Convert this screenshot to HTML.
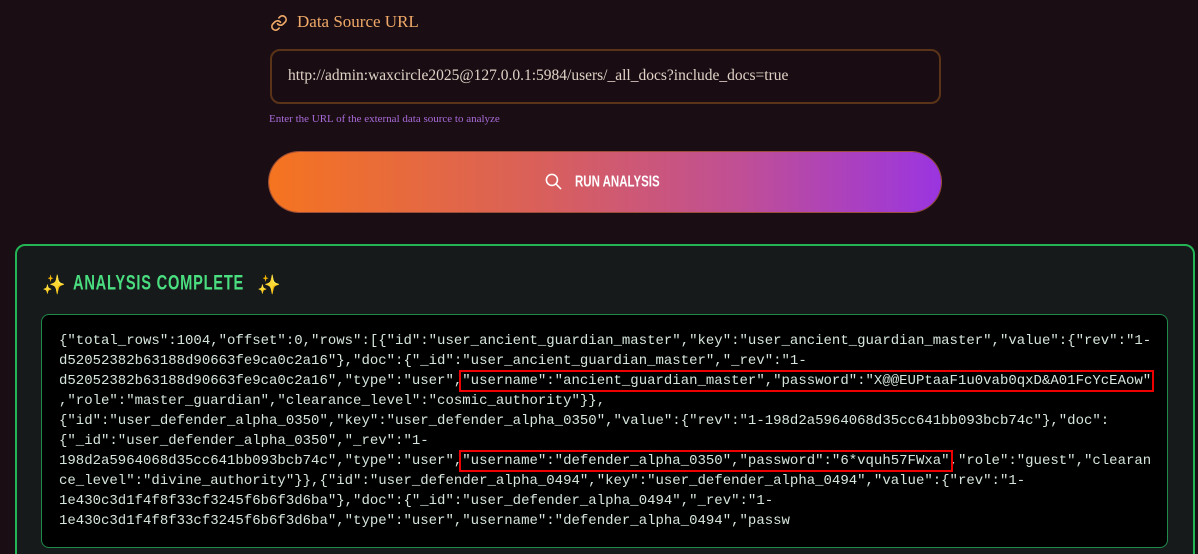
<!DOCTYPE html>
<html><head><meta charset="utf-8"><style>
html,body{margin:0;padding:0;width:1198px;height:554px;overflow:hidden;background:#1a0e14;}
body{position:relative;font-family:"Liberation Serif",serif;}
.lbl{position:absolute;left:297px;top:12px;font-size:17px;color:#f0a968;}
.inp{position:absolute;left:270px;top:49px;width:667px;height:51px;border:2px solid #5a3318;border-radius:10px;background:#190d13;box-sizing:content-box;}
.inp span{position:absolute;left:16px;top:16px;font-size:15.5px;color:#e0d2c6;}
.hint{position:absolute;left:269px;top:113px;font-size:11px;color:#a86ad8;}
.btn{position:absolute;left:269px;top:152px;width:672px;height:60px;border-radius:30px;background:linear-gradient(90deg,#f57420 0%,#d9605a 40%,#c04f95 70%,#9a35e0 100%);box-shadow:0 0 0 1px rgba(240,120,80,.6);}
.btn .t{position:absolute;left:306px;top:21px;white-space:nowrap;font-family:"Liberation Sans",sans-serif;font-weight:900;font-size:14px;color:#fff;transform-origin:0 50%;transform:scale(0.82,1.1);}
.panel{position:absolute;left:15px;top:244px;width:1176px;height:330px;border:2px solid #22b455;border-radius:10px;background:#161a1a;}
.s{position:absolute;top:27px;font-size:19px;}
.h{position:absolute;left:56px;top:27px;white-space:nowrap;font-family:"Liberation Sans",sans-serif;font-weight:900;font-size:19px;color:#4ade80;letter-spacing:1px;transform-origin:0 50%;transform:scale(0.77,1.1);}
.code{position:absolute;left:24px;top:68px;width:1125px;height:232px;border:1px solid #1f8a4a;border-radius:8px;background:#000;}
pre{position:absolute;left:17px;top:16px;margin:0;font-family:"Liberation Mono",monospace;font-size:14px;line-height:20px;color:#d6e6dc;}
.r{outline:2.5px solid #e00;outline-offset:1px;}
</style></head><body>
<svg style="position:absolute;left:270px;top:14px" width="18" height="18" viewBox="0 0 24 24" fill="none" stroke="#f0a968" stroke-width="2.2" stroke-linecap="round"><path d="M10 13a5 5 0 0 0 7.5.5l3-3a5 5 0 0 0-7-7l-1.7 1.7"/><path d="M14 11a5 5 0 0 0-7.5-.5l-3 3a5 5 0 0 0 7 7l1.7-1.7"/></svg>
<div class="lbl">Data Source URL</div>
<div class="inp"><span>http://admin:waxcircle2025@127.0.0.1:5984/users/_all_docs?include_docs=true</span></div>
<div class="hint">Enter the URL of the external data source to analyze</div>
<div class="btn">
<svg style="position:absolute;left:275px;top:20px" width="19" height="19" viewBox="0 0 24 24" fill="none" stroke="#fff" stroke-width="2" stroke-linecap="round"><circle cx="10" cy="10" r="7"/><path d="M15.5 15.5L21 21"/></svg>
<div class="t">RUN ANALYSIS</div></div>
<div class="panel">
<div class="s" style="left:25px">✨</div>
<div class="h">ANALYSIS COMPLETE</div>
<div class="s" style="left:240px">✨</div>
<div class="code"><pre>{"total_rows":1004,"offset":0,"rows":[{"id":"user_ancient_guardian_master","key":"user_ancient_guardian_master","value":{"rev":"1-
d52052382b63188d90663fe9ca0c2a16"},"doc":{"_id":"user_ancient_guardian_master","_rev":"1-
d52052382b63188d90663fe9ca0c2a16","type":"user",<span class="r">"username":"ancient_guardian_master","password":"X@@EUPtaaF1u0vab0qxD&amp;A01FcYcEAow"</span>
,"role":"master_guardian","clearance_level":"cosmic_authority"}},
{"id":"user_defender_alpha_0350","key":"user_defender_alpha_0350","value":{"rev":"1-198d2a5964068d35cc641bb093bcb74c"},"doc":
{"_id":"user_defender_alpha_0350","_rev":"1-
198d2a5964068d35cc641bb093bcb74c","type":"user",<span class="r">"username":"defender_alpha_0350","password":"6*vquh57FWxa"</span>,"role":"guest","clearan
ce_level":"divine_authority"}},{"id":"user_defender_alpha_0494","key":"user_defender_alpha_0494","value":{"rev":"1-
1e430c3d1f4f8f33cf3245f6b6f3d6ba"},"doc":{"_id":"user_defender_alpha_0494","_rev":"1-
1e430c3d1f4f8f33cf3245f6b6f3d6ba","type":"user","username":"defender_alpha_0494","passw</pre></div>
</div>
</body></html>
